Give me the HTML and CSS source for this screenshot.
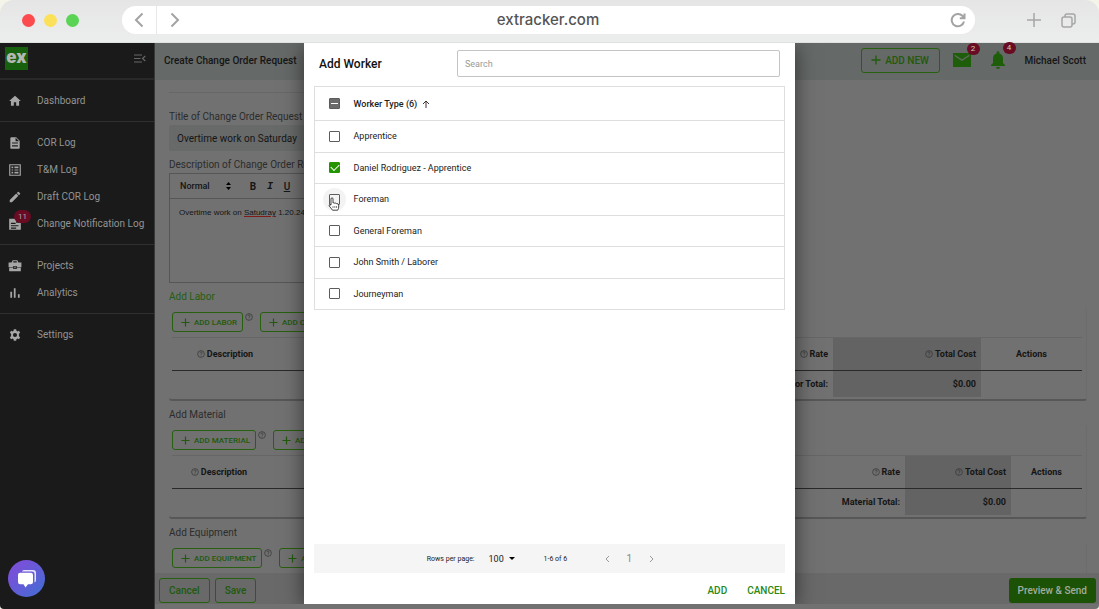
FILE: index.html
```html
<!DOCTYPE html>
<html lang="en">
<head>
<meta charset="utf-8">
<title>Create Change Order Request</title>
<meta name="viewport" content="width=device-width, initial-scale=1">
<link rel="stylesheet" href="styles.css">
</head>
<body>
<svg class="defs" aria-hidden="true">
  <symbol id="plus" viewBox="0 0 10 10"><path d="M5 .5v9M.5 5h9" fill="none" stroke="currentColor" stroke-width="1.3"/></symbol>
  <symbol id="help" viewBox="0 0 10 10"><circle cx="5" cy="5" r="4.2" fill="none" stroke="currentColor" stroke-width=".9"/><path d="M3.6 4c0-2 2.9-1.9 2.8-.2C6.4 4.800 5 4.900 5 6M5 7v.9" fill="none" stroke="currentColor" stroke-width=".9"/></symbol>
</svg>
<div class="window">
  <header class="chrome">
    <div class="lights"><span class="light red"></span><span class="light yellow"></span><span class="light green"></span></div>
    <div class="address">
      <button class="nav-btn back" aria-label="Back"><svg width="10" height="16" viewBox="0 0 10 16"><path d="M8.500 1.500 2 8l6.500 6.500"/></svg></button>
      <button class="nav-btn" aria-label="Forward"><svg width="10" height="16" viewBox="0 0 10 16"><path d="M1.500 1.500 8 8l-6.500 6.500"/></svg></button>
      <span class="url">extracker.com</span>
      <button class="nav-btn reload" aria-label="Reload"><svg width="16" height="16" viewBox="0 0 16 16"><path d="M14 9.500A6.200 6.200 0 1 1 12.600 4L14.300 6M14.500 1.500V6.300H9.800"/></svg></button>
    </div>
    <div class="tab-tools">
      <button class="nav-btn" aria-label="New tab"><svg width="14" height="14" viewBox="0 0 14 14"><path d="M7 0v14M0 7h14"/></svg></button>
      <button class="nav-btn" aria-label="Show tabs"><svg width="15" height="15" viewBox="0 0 15 15"><rect x="1" y="4" width="10" height="10" rx="2"/><path d="M4 4V3q0-2 2-2h6q2 0 2 2v6q0 2-2 2h-1"/></svg></button>
    </div>
  </header>

  <div class="app">
    <aside class="sidebar">
      <div class="brand">
        <span class="logo">ex</span>
        <button class="collapse" aria-label="Collapse menu"><svg width="12" height="9" viewBox="0 0 12 9"><path d="M0 1h8M0 4.500h6.500M0 8h8M11.300 2 8.500 4.500l2.800 2.500" fill="none" stroke="currentColor" stroke-width="1.200"/></svg></button>
      </div>
      <nav>
        <div class="group">
          <a href="#"><svg viewBox="0 0 24 24"><path d="M10 20v-6h4v6h5v-8h3L12 3 2 12h3v8z"/></svg>Dashboard</a>
        </div>
        <div class="group">
          <a href="#"><svg viewBox="0 0 24 24"><path fill-rule="evenodd" d="M14 2H6q-2 0-2 2v16q0 2 2 2h12q2 0 2-2V8zM7 11h10v2H7zm0 5h10v2H7zm6-13 6 6h-6z"/></svg>COR Log</a>
          <a href="#"><svg viewBox="0 0 24 24"><path fill-rule="evenodd" d="M2 2h20v20H2zm2 2v16h16V4zM6 6h3v3H6zm5 0h7v3h-7zm-5 5h3v2H6zm5 0h7v2h-7zm-5 4h3v3H6zm5 0h7v3h-7z"/></svg>T&amp;M Log</a>
          <a href="#"><svg viewBox="0 0 24 24"><path d="M3 17.300V21h3.800L17.800 9.900l-3.700-3.700zM20.700 7q.6-.7 0-1.400l-2.300-2.300q-.7-.6-1.400 0l-1.900 1.900 3.700 3.700z"/></svg>Draft COR Log</a>
          <a href="#"><svg viewBox="0 0 24 24"><path fill-rule="evenodd" d="M2 3h12v7h8v12H2zm3 7v2h8v-2zm0 4v2h13v-2zm0 4v2h9v-2z"/></svg><span class="badge side-badge">11</span>Change Notification Log</a>
        </div>
        <div class="group">
          <a href="#"><svg viewBox="0 0 24 24"><path fill-rule="evenodd" d="M8 2h8l2 4h5v8h-8v-2H9v2H1V6h5zm1 2v2h6V4zM2 15h7v2h6v-2h7v6H2zM11 13h2v3h-2z"/></svg>Projects</a>
          <a href="#"><svg viewBox="0 0 24 24"><path d="M4 10h3v10H4zM10 4h3v16h-3zM17 14h3v6h-3z"/></svg>Analytics</a>
        </div>
        <div class="group last">
          <a href="#"><svg viewBox="0 0 24 24"><path fill-rule="evenodd" d="m10 2-.5 2.800-1.700 1-2.600-1-2 3.400L5.300 10v4l-2.100 1.800 2 3.400 2.600-1 1.700 1L10 22h4l.5-2.800 1.700-1 2.600 1 2-3.400-2.100-1.800v-4l2.100-1.800-2-3.400-2.600 1-1.700-1L14 2zm2 6.500a3.500 3.500 0 1 1 0 7 3.500 3.500 0 0 1 0-7z"/></svg>Settings</a>
        </div>
      </nav>
      <button class="chat" aria-label="Open chat"><svg width="20" height="20" viewBox="0 0 20 20"><path d="M5 2.500Q5 1 7 1h9q3 0 3 3v7q0 2-1.500 2.500V5q0-2.500-2.500-2.500z" fill="#e9e4ff"/><path d="M1 6q0-2.200 2.200-2.200h10.600Q16 3.800 16 6v7q0 2.200-2.200 2.200H11L8.500 18.500 6.500 15.200H3.200Q1 15.200 1 13z" fill="#fff"/></svg></button>
    </aside>

    <main class="main">
      <div class="topbar">
        <h1>Create Change Order Request</h1>
        <div class="user-tools">
          <button class="outline add-new"><svg width="10" height="10"><use href="#plus"/></svg>ADD NEW</button>
          <button class="icon-btn" aria-label="Messages"><svg width="20" height="16" viewBox="0 0 20 16"><path fill-rule="evenodd" d="M1 1h18v14H1zM2.500 2.500 3 4.300l7 4.700 7-4.700.5-1.800L10 7.500z"/></svg><span class="badge">2</span></button>
          <button class="icon-btn bell" aria-label="Notifications"><svg width="16" height="18" viewBox="0 0 16 18"><path d="M8 18q2 0 2-2H6q0 2 2 2M13 12V7.500q0-4-3.600-5V1.700q0-1.400-1.400-1.400T6.600 1.700v.8q-3.600 1-3.600 5V12l-2 2v1h14v-1z"/></svg><span class="badge">4</span></button>
          <span class="user">Michael Scott</span>
        </div>
      </div>

      <div class="content">
        <form class="details">
          <label for="title">Title of Change Order Request</label>
          <input id="title" class="title-input" value="Overtime work on Saturday">
          <span class="label" id="desc">Description of Change Order Request</span>
          <div class="editor">
            <div class="editor-bar">
              <span class="format"><select aria-label="Text style"><option>Normal</option></select><svg width="5" height="8" viewBox="0 0 5 8"><path d="M2.500 0 5 3H0zM0 5h5L2.500 8z"/></svg></span>
              <button type="button" aria-label="Bold"><b>B</b></button>
              <button type="button" aria-label="Italic"><i class="mono">I</i></button>
              <button type="button" aria-label="Underline"><u>U</u></button>
            </div>
            <div class="editor-body" contenteditable="true" role="textbox" aria-labelledby="desc" spellcheck="false">Overtime work on <span class="typo">Satudray</span> 1.20.24</div>
          </div>
        </form>

        <section class="costs">
          <h2 class="active">Add Labor</h2>
          <div class="card">
            <div class="card-tools"><button class="outline"><svg width="9" height="9"><use href="#plus"/></svg>ADD LABOR</button><svg class="help" width="8" height="8"><use href="#help"/></svg><button class="outline"><svg width="9" height="9"><use href="#plus"/></svg>ADD CREW</button></div>
            <table class="labor">
              <colgroup><col class="c-desc"><col><col class="c-total"><col class="c-act"></colgroup>
              <thead><tr><th class="mid"><svg width="8" height="8"><use href="#help"/></svg>Description</th><th><svg width="8" height="8"><use href="#help"/></svg>Rate</th><th class="total"><svg width="8" height="8"><use href="#help"/></svg>Total Cost</th><th class="mid">Actions</th></tr></thead>
              <tbody><tr><td></td><td>Labor Total:</td><td class="total">$0.00</td><td></td></tr></tbody>
            </table>
          </div>
        </section>
        <section class="costs">
          <h2>Add Material</h2>
          <div class="card">
            <div class="card-tools"><button class="outline"><svg width="9" height="9"><use href="#plus"/></svg>ADD MATERIAL</button><svg class="help" width="8" height="8"><use href="#help"/></svg><button class="outline"><svg width="9" height="9"><use href="#plus"/></svg>ADD OTHER</button></div>
            <table class="material">
              <colgroup><col class="c-desc"><col><col class="c-total"><col class="c-act"></colgroup>
              <thead><tr><th class="mid"><svg width="8" height="8"><use href="#help"/></svg>Description</th><th><svg width="8" height="8"><use href="#help"/></svg>Rate</th><th class="total"><svg width="8" height="8"><use href="#help"/></svg>Total Cost</th><th class="mid">Actions</th></tr></thead>
              <tbody><tr><td></td><td>Material Total:</td><td class="total">$0.00</td><td></td></tr></tbody>
            </table>
          </div>
        </section>
        <section class="costs">
          <h2>Add Equipment</h2>
          <div class="card">
            <div class="card-tools"><button class="outline"><svg width="9" height="9"><use href="#plus"/></svg>ADD EQUIPMENT</button><svg class="help" width="8" height="8"><use href="#help"/></svg><button class="outline"><svg width="9" height="9"><use href="#plus"/></svg>ADD OTHER</button></div>
          </div>
        </section>
      </div>

      <footer class="actions">
        <button class="outline">Cancel</button>
        <button class="outline">Save</button>
        <button class="send">Preview &amp; Send</button>
      </footer>
    </main>

    <div class="overlay">
      <div class="modal" role="dialog" aria-labelledby="modal-title">
        <div class="modal-head">
          <h2 id="modal-title">Add Worker</h2>
          <input type="search" placeholder="Search" aria-label="Search">
        </div>
        <table class="workers">
          <thead><tr><th class="tick"><input type="checkbox" class="some" aria-label="Select all"></th><th>Worker Type (6)<svg width="8" height="8" viewBox="0 0 8 8"><path d="M4 8V1M1 4l3-3 3 3" fill="none" stroke="currentColor" stroke-width=".9"/></svg></th></tr></thead>
          <tbody>
            <tr><td class="tick"><input type="checkbox" id="w1"></td><td><label for="w1">Apprentice</label></td></tr>
            <tr><td class="tick"><input type="checkbox" id="w2" checked></td><td><label for="w2">Daniel Rodriguez - Apprentice</label></td></tr>
            <tr><td class="tick"><span class="hover"><input type="checkbox" id="w3"><svg class="pointer" width="12" height="14" viewBox="0 0 12 14"><path d="M3 8V2q0-1.200 1-1.200T5 2v4q1-.8 1.800.3 1.200-.7 1.900.4 1.800-.4 2 1.300v2q0 1.500-1 3.200H4.500Q3 11 1.200 9q-.4-1.300.6-1.300z" fill="#fff" stroke="#333" stroke-width=".9"/><path d="M5 9v2M6.800 9v2M8.500 9v2" stroke="#333" stroke-width=".6"/></svg></span></td><td><label for="w3">Foreman</label></td></tr>
            <tr><td class="tick"><input type="checkbox" id="w4"></td><td><label for="w4">General Foreman</label></td></tr>
            <tr><td class="tick"><input type="checkbox" id="w5"></td><td><label for="w5">John Smith / Laborer</label></td></tr>
            <tr><td class="tick"><input type="checkbox" id="w6"></td><td><label for="w6">Journeyman</label></td></tr>
          </tbody>
        </table>
        <div class="pager">
          <label for="rows">Rows per page:</label>
          <span class="rows"><select id="rows"><option>100</option></select><svg width="6" height="3" viewBox="0 0 6 3"><path d="M0 0h6L3 3z"/></svg></span>
          <span class="range">1-6 of 6</span>
          <button aria-label="Previous page"><svg width="5" height="8" viewBox="0 0 5 8"><path d="M4 1 1 4l3 3"/></svg></button>
          <button>1</button>
          <button aria-label="Next page"><svg width="5" height="8" viewBox="0 0 5 8"><path d="m1 1 3 3-3 3"/></svg></button>
        </div>
        <div class="modal-actions"><button>ADD</button><button>CANCEL</button></div>
      </div>
    </div>
  </div>
</div>
</body>
</html>
```

FILE: styles.css
```css
* { box-sizing: border-box; }
body { margin: 0; background: #f4f4e8; font-family: Roboto, "Liberation Sans", sans-serif; font-size: 10px; color: #222; }
button, input, select { font: inherit; color: inherit; }
button { padding: 0; border: 0; background: none; display: flex; align-items: center; justify-content: center; }
h1, h2 { margin: 0; font-size: 10px; font-weight: 500; }
.defs { display: none; }

.window { height: 100vh; display: flex; flex-direction: column; overflow: hidden; border-radius: 14px 14px 4px 4px; }

/* Browser bar */
.chrome { flex: none; height: 43px; display: flex; align-items: center; padding: 0 23px 2px 22px; background: linear-gradient(#e5e5e5, #eceeed); border-bottom: 1px solid #dfe1e0; }
.lights { display: flex; gap: 9px; width: 100px; }
.light { width: 13px; height: 13px; border-radius: 50%; }
.red { background: #fc4b4e; }
.yellow { background: #fbe05a; }
.green { background: #5bd456; }
.address { flex: 1; height: 28px; display: flex; align-items: center; background: #fff; border-radius: 14px; }
.nav-btn { width: 35px; height: 28px; }
.nav-btn svg { fill: none; stroke: #a3a3a3; stroke-width: 2; }
.back { border-right: 1px solid #e8e8e8; }
.url { flex: 1; text-align: center; font: 500 15px/28px Inter, sans-serif; color: #555; padding-right: 36px; }
.tab-tools { display: flex; width: 101px; justify-content: flex-end; }
.tab-tools .nav-btn:last-child { width: 15px; margin-left: 10px; }
.tab-tools .nav-btn svg { stroke-width: 1.5; stroke: #a6a6a6; }

.app { position: relative; flex: 1; min-height: 0; display: grid; grid-template-columns: 155px 1fr; }

/* Side menu */
.sidebar { background: #1a1a1a; color: #939393; border-right: 1px solid #383838; display: flex; flex-direction: column; min-height: 0; }
.brand { height: 37px; display: flex; align-items: center; justify-content: space-between; padding: 0 8px 4px 5px; border-bottom: 2px solid #292929; }
.logo { width: 23px; height: 23px; background: #17600d; color: #b4b8b2; font: 900 17px/21px Inter, sans-serif; text-align: center; }
.collapse { color: #666; }
.group { padding: 7px 0; border-bottom: 1px solid #303030; }
.group.last { border: 0; }
.group a { position: relative; display: flex; align-items: center; gap: 15px; height: 27px; padding-left: 8px; color: inherit; text-decoration: none; white-space: nowrap; }
.group svg { width: 14px; height: 14px; fill: #a6a6a6; }
.badge { position: absolute; display: block; border-radius: 8px; background: #690b22; color: #aaa; font-size: 8px; text-align: center; }
.side-badge { left: 14px; top: 0; width: 17px; height: 13px; line-height: 13px; }
.chat { width: 37px; height: 37px; margin: auto 0 12px 8px; border-radius: 50%; background: linear-gradient(135deg, #7652d8 25%, #3f6fd3); }

/* Dimmed page */
.main { min-width: 0; min-height: 0; display: flex; flex-direction: column; background: #717171; color: #151515; padding-bottom: 5px; }
.topbar { flex: none; height: 37px; display: flex; align-items: center; justify-content: space-between; padding: 0 13px 3px 9px; background: #656967; }
.user-tools { display: flex; align-items: center; gap: 12px; }
.outline { border: 1px solid #27600f; border-radius: 3px; color: #215a0c; font-weight: 500; gap: 4px; white-space: nowrap; }
.add-new { width: 79px; height: 25px; }
.icon-btn { position: relative; }
.icon-btn svg { fill: #1e5e0b; }
.icon-btn .badge { right: -8px; top: -9px; width: 13px; height: 12px; line-height: 12px; color: #ccc; }
.bell { margin-left: 6px; }
.bell .badge { right: -10px; }
.user { font-weight: 500; padding-left: 7px; }

.content { flex: 1; min-height: 0; overflow: hidden; padding: 12px 12px 0 14px; }
.details { width: 70%; max-width: 600px; padding-top: 17px; border-top: 1px solid #676767; display: flex; flex-direction: column; }
.details label, .label { height: 15px; line-height: 13px; color: #2c2c2c; }
.title-input { height: 26px; padding: 0 8px; border: 0; border-radius: 2px; background: #676a69; margin-bottom: 7px; }
.editor { height: 110px; border: 1px solid #565656; }
.editor-bar { height: 25px; padding-left: 10px; display: flex; align-items: center; gap: 9px; border-bottom: 1px solid #565656; font-size: 9px; }
.editor-bar button { width: 8px; font-size: 10px; font-weight: 500; }
.mono { font-family: "Liberation Mono", monospace; font-weight: 700; }
.format { display: flex; align-items: center; width: 60px; }
.format select { appearance: none; border: 0; background: none; padding: 0; width: 46px; font-weight: 500; }
.editor-body { padding: 8px 9px; font: 8px/12px "Liberation Sans", sans-serif; }
.typo { text-decoration: underline; text-decoration-color: #801b1b; }

.costs { margin-top: 3px; }
.costs h2 { height: 21px; line-height: 21px; font-weight: 400; color: #2c2c2c; }
.costs h2.active { color: #245e10; }
.card { height: 94px; padding: 5px 4px 0 3px; border: solid #6c6c6c; border-width: 0 1px 2px 0; border-bottom-color: #575757; border-radius: 3px; }
.card-tools { display: flex; align-items: flex-start; margin-bottom: 5px; }
.card-tools .outline { height: 20px; padding: 0 5px 0 8px; font-size: 8px; }
.help { margin: 1px 7px 0 2px; color: #373737; }
.card table { width: 100%; table-layout: fixed; border-collapse: collapse; font-size: 9px; text-align: right; }
.card th { height: 33px; border-top: 1px solid #666; border-bottom: 1px solid #292929; }
.card td { height: 26px; }
.card th, .card td { padding: 0 5px; font-weight: 700; }
.card th svg { color: #363636; vertical-align: -1px; margin-right: 2px; }
.card .mid { text-align: center; }
.total { background: #636363; }
.labor .c-desc { width: 106px; }
.labor .c-total { width: 148px; }
.labor .c-act { width: 101px; }
.material .c-desc { width: 94px; }
.material .c-total { width: 106px; }
.material .c-act { width: 71px; }

.actions { flex: none; height: 31px; display: flex; align-items: center; gap: 5px; padding: 3px 3px 0 4px; background: #696969; }
.actions .outline { height: 25px; padding: 0 9px; }
.actions .send { height: 25px; margin-left: auto; padding: 0 9px; border-radius: 3px; background: #1b5205; color: #a3ac9e; font-weight: 500; }

/* Worker picker */
.overlay { position: absolute; inset: 0 0 5px; display: flex; justify-content: center; overflow: hidden; }
.modal { width: 491px; max-width: 100%; display: flex; flex-direction: column; padding: 7px 10px 5px; background: #fff; box-shadow: 0 4px 20px rgba(0, 0, 0, .55); }
.modal-head { display: flex; align-items: center; justify-content: space-between; padding: 0 5px 9px; }
.modal-head h2 { font-size: 12px; color: #111; }
.modal-head input { width: 323px; height: 27px; padding: 0 7px; border: 1px solid #c4c4c4; border-radius: 2px; background: #fff; font-size: 9px; }
.modal-head input::placeholder { color: #999; }
.workers { width: 100%; height: 224px; border-collapse: collapse; border: 1px solid #dedede; font-size: 8px; text-align: left; }
.workers tr { border-bottom: 1px solid #dedede; }
.workers th, .workers td { padding: 0; height: 31px; }
.workers th { height: 34px; font-weight: 500; }
.workers th svg { margin-left: 5px; vertical-align: -1px; }
.workers .tick { width: 39px; padding-left: 14px; }
.workers th, .workers label { font-size: 9px; }
.workers input { appearance: none; display: block; position: relative; width: 11px; height: 11px; margin: 0; border: 1px solid #5c5c5c; border-radius: 1px; }
.workers .some { background: #6b6b6b; }
.workers .some::after { content: ""; position: absolute; left: 1px; top: 4px; width: 7px; height: 1px; background: #fff; }
.workers input:checked { background: #249400; border-color: #249400; }
.workers input:checked::after { content: ""; position: absolute; left: 1px; top: 1px; width: 7px; height: 4px; border: solid #fff; border-width: 0 0 1px 1px; transform: rotate(-45deg); }
.hover { position: relative; display: block; width: 11px; border-radius: 50%; box-shadow: 0 0 0 6px #f3f3f3; background: #f3f3f3; }
.pointer { position: absolute; left: -1px; top: 3px; }
.pager { height: 29px; margin-top: auto; padding-right: 10px; display: flex; align-items: center; justify-content: center; background: #f5f5f5; font-size: 7px; }
.pager label { color: #222; }
.rows { display: flex; align-items: center; margin: 0 29px 0 14px; font-size: 9px; }
.rows select { appearance: none; width: 20px; border: 0; padding: 0; background: none; }
.range { margin-right: 29px; }
.pager button { width: 22px; height: 20px; color: #888; font-size: 10px; }
.pager button svg { fill: none; stroke: #999; }
.modal-actions { display: flex; justify-content: flex-end; gap: 20px; padding-top: 8px; height: 26px; color: #2a8a13; }
.modal-actions button { font-weight: 500; }
```
